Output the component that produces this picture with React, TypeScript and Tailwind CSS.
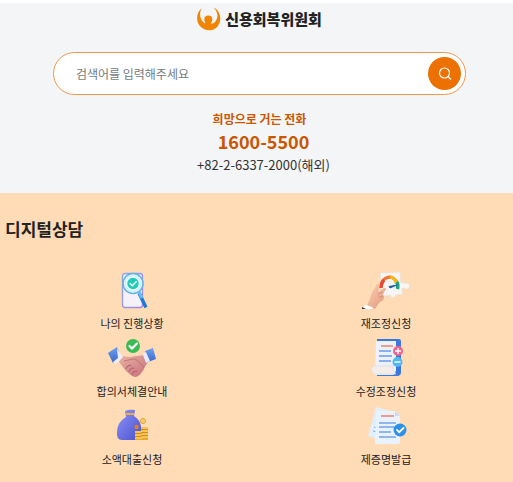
import type { ReactNode } from "react";

function Logo() {
  return (
    <svg viewBox="0 0 24 24" className="size-6" aria-hidden="true">
      <path d="M4.800 1.200C-.6 5-1.300 13.500 2.500 18.500C7 24.500 16 25 20.500 19.500C25.500 13.500 23.500 3.500 16.500.5C21 4.500 21.500 10.500 18.500 14.200C17.500 15.500 16 16.500 14 17C12.500 17.500 10 17.500 8.500 16.700C3.500 14.500 1.300 7 4.800 1.200Z" fill="#f18400" />
      <circle cx="11.300" cy="12.600" r="4" fill="#f18400" />
      <path d="M9 15h4.600l1.600 3H7z" fill="#f18400" />
    </svg>
  );
}

function ProgressIcon() {
  return (
    <svg viewBox="0 0 48 40" className="h-10 w-12" aria-hidden="true">
      <defs>
        <linearGradient id="phone" x1="0" y1="0" x2="1" y2="1">
          <stop offset="0" stopColor="#8fa6ef" />
          <stop offset="1" stopColor="#a487e0" />
        </linearGradient>
      </defs>
      <rect x="14.500" y="2.500" width="20" height="34" rx="2.500" fill="#f4f1fa" stroke="url(#phone)" strokeWidth="1.300" />
      <path d="M31 22l7 14.500" stroke="#2378d2" strokeWidth="3.500" />
      <path d="M31 21l3 6" stroke="#64bdf4" strokeWidth="3" />
      <circle cx="25" cy="12.500" r="10" fill="#effaff" stroke="#5fb2e6" strokeWidth="1.500" />
      <circle cx="25" cy="12.500" r="8" fill="none" stroke="#d4eefc" strokeWidth="1.500" />
      <circle cx="25" cy="12.500" r="5.700" fill="#1dcdb9" />
      <path d="M22.100 12.500l2.200 2.200 3.900-4" fill="none" stroke="#fff" strokeWidth="1.500" strokeLinecap="round" />
    </svg>
  );
}

function PuzzleIcon() {
  return (
    <svg viewBox="0 0 48 40" className="h-10 w-12" aria-hidden="true">
      <defs>
        <linearGradient id="skin" x1="0" y1="0" x2="1" y2="1">
          <stop offset="0" stopColor="#ffd2b3" />
          <stop offset="1" stopColor="#dc9680" />
        </linearGradient>
      </defs>
      <path d="M18 2l20-1 1 11c2-1 3-.5 4 .5 3-1.500 5 .5 4.500 3-.4 3-3 3.500-5 1.500l-2.500.5.500 6-7 .5c1 3-5 4-5 .5l-9 .500z" fill="#f8f5f5" stroke="#e8dbd4" strokeWidth=".6" />
      <path d="M19 17c-.5-12 13-15 16.500-4" fill="none" stroke="#f3772f" strokeWidth="3.200" />
      <path d="M19 17c0-4 1-6 3-8" fill="none" stroke="#e94837" strokeWidth="3.200" />
      <path d="M28 6c3 .5 5.500 3 6.500 6" fill="none" stroke="#f5b91c" strokeWidth="3.200" />
      <path d="M35 11c1 2 1 5 .5 7" fill="none" stroke="#18a47c" strokeWidth="3.500" />
      <path d="M27 15.500l8-1.500-7 3z" fill="#263c8c" stroke="#2463bb" strokeWidth="1" />
      <path d="M4 36c3-5 4-8 5-12 1-4 3-5 5-9 1-3 4-3 3.500 0L16 21c2 0 4-3 6-4 3 0 2 2 0 4l-1 3 1 2c0 3-2 4-4 5-2 2-3 4-5 7z" fill="url(#skin)" />
      <path d="M16 23l4-2M17 26l4-1" stroke="#ca8571" strokeWidth=".8" />
      <path d="M3 34c3 0 6 1 9 4H0z" fill="#fff" />
      <path d="M0 36l4 2H0z" fill="#333b56" />
    </svg>
  );
}

function HandshakeIcon() {
  return (
    <svg viewBox="0 0 48 40" className="h-10 w-12" aria-hidden="true">
      <defs>
        <linearGradient id="hands" x1="0" y1="0" x2="1" y2="1">
          <stop offset="0" stopColor="#eab4a3" />
          <stop offset="1" stopColor="#c66d7b" />
        </linearGradient>
        <linearGradient id="sleeve" x1="0" y1="0" x2="0" y2="1">
          <stop offset="0" stopColor="#6ca2ee" />
          <stop offset="1" stopColor="#3c68cc" />
        </linearGradient>
      </defs>
      <path d="M13 17l9 1 6-1 9-1 3 7c-2 3-3 4-4 7-3 5-6 8-9 8-4-1-6-4-9-6l-7-9z" fill="url(#hands)" />
      <path d="M16 22c5-1 8-2 11-2 4 2 7 6 9 9" fill="none" stroke="#b76775" strokeWidth=".8" />
      <path d="M18 30c0-2 4-5 5-3M21 33c0-3 4-5 5-3M24 36c0-3 4-5 5-3" fill="none" stroke="#b66674" strokeWidth="1.200" />
      <path d="M0 14l9-6 4 10-8 6z" fill="url(#sleeve)" />
      <path d="M9 10l6 8-7 7-3-2 5-4z" fill="#eef1fd" />
      <path d="M37 12l8-3 3 11-8 3z" fill="url(#sleeve)" />
      <path d="M35 16l3-3 4 9-4 2z" fill="#e8e9fd" />
      <circle cx="25" cy="7" r="7" fill="#3cba54" />
      <path d="M21.500 7l2.500 2.500 5-5" fill="none" stroke="#fff" strokeWidth="2.200" strokeLinecap="round" />
    </svg>
  );
}

function AdjustIcon() {
  return (
    <svg viewBox="0 0 48 40" className="h-10 w-12" aria-hidden="true">
      <path d="M15 0h22q2 0 2 2v31q0 4-4 4H15z" fill="#3b77dc" />
      <path d="M14 2h20v28c0 3-1 5-3 6H13z" fill="#edf1fb" />
      <path d="M11 27h20c-1 3 0 6 3 8H13c-4 0-4-6-2-8z" fill="#f5eee8" stroke="#d9dce7" strokeWidth=".7" />
      <path d="M19 7h12" stroke="#ed826f" strokeWidth="1.500" />
      <path d="M17 12h12M17 17h13M17 22h12" stroke="#6a9ceb" strokeWidth="1.500" />
      <circle cx="36" cy="12" r="5" fill="#ef658e" />
      <path d="M33 12h6M36 9v6" stroke="#fff" strokeWidth="1.400" />
      <circle cx="35.500" cy="23" r="5" fill="#52b8ef" />
      <path d="M32.500 23h6" stroke="#fff" strokeWidth="1.400" />
    </svg>
  );
}

function LoanIcon() {
  return (
    <svg viewBox="0 0 48 40" className="h-10 w-12" aria-hidden="true">
      <defs>
        <linearGradient id="bag" x1="0" y1="0" x2="1" y2="1">
          <stop offset="0" stopColor="#8e92fb" />
          <stop offset="1" stopColor="#4a53c9" />
        </linearGradient>
      </defs>
      <path d="M17 4q4-2 10-1l-1 6c7 4 8 12 7 18 0 4-3 6-6 6H14c-4 0-5-3-5-7 0-8 3-12 9-16z" fill="url(#bag)" />
      <path d="M18 7h8" stroke="#edae3c" strokeWidth="2" />
      <path d="M27 24h7v9h-7zM33 20h7v13h-7z" fill="#e8a62d" />
      <path d="M27 25h7M27 28h7M27 31h7M33 21h7M33 24h7M33 27h7M33 30h7" stroke="#ffe27c" strokeWidth="1" />
      <path d="M27 26.500h7M27 29.500h7M33 22.500h7M33 25.500h7M33 28.500h7" stroke="#bd771e" strokeWidth=".6" />
      <circle cx="35" cy="14" r="2.500" fill="#f9d06a" stroke="#dfa23b" strokeWidth="1" />
      <circle cx="28.500" cy="20" r="2.200" fill="#e17f22" />
    </svg>
  );
}

function CertificateIcon() {
  return (
    <svg viewBox="0 0 48 40" className="h-10 w-12" aria-hidden="true">
      <path d="M14 0l15 4-10 29-13-4z" fill="#e1effc" />
      <path d="M12 20l10 3M11 24l8 2" stroke="#76aaed" strokeWidth="1" />
      <path d="M14 4h19l5 5v26q0 2-2 2H15q-2 0-2-2z" fill="#e8f3ff" />
      <path d="M33 4v5h5z" fill="#c5def9" />
      <path d="M19 9h13" stroke="#ee8276" strokeWidth="1.600" />
      <path d="M17 16h17M17 20h17M17 25h12M17 30h17" stroke="#75a3eb" strokeWidth="1.500" />
      <circle cx="38" cy="23" r="6.500" fill="#2d91e8" />
      <path d="M35 23l2.200 2.200 4.300-4.200" fill="none" stroke="#fff" strokeWidth="1.800" strokeLinecap="round" />
    </svg>
  );
}

const services: { label: string; icon: ReactNode }[] = [
  { label: "나의 진행상황", icon: <ProgressIcon /> },
  { label: "재조정신청", icon: <PuzzleIcon /> },
  { label: "합의서체결안내", icon: <HandshakeIcon /> },
  { label: "수정조정신청", icon: <AdjustIcon /> },
  { label: "소액대출신청", icon: <LoanIcon /> },
  { label: "제증명발급", icon: <CertificateIcon /> },
];

export default function App() {
  return (
    <div className="bg-white pt-[3px] font-['Noto_Sans_CJK_KR',sans-serif] text-[#222]">
      <header className="flex flex-col items-center bg-[#f3f5f7] pt-1 pb-4 pl-[6px]">
        <h1 className="flex h-6 items-center gap-1 text-[15px] leading-6 font-black">
          <Logo />
          신용회복위원회
        </h1>
        <form
          role="search"
          onSubmit={(event) => event.preventDefault()}
          className="mt-[21px] flex h-[43px] w-[81.5%] items-center rounded-full border border-[#f0974a] bg-white pr-1 pl-[22px]"
        >
          <input
            type="search"
            aria-label="검색어"
            placeholder="검색어를 입력해주세요"
            className="min-w-0 flex-1 bg-transparent text-[12px] leading-5 outline-none placeholder:text-[#747b7d]"
          />
          <button type="submit" aria-label="검색" className="flex size-[33px] shrink-0 items-center justify-center rounded-full bg-[#ed7100] text-white">
            <svg viewBox="0 0 16 16" className="size-4" fill="none" stroke="currentColor" strokeWidth="1.200" aria-hidden="true">
              <circle cx="7.500" cy="7" r="5" />
              <path d="M11 10.500l3 3" />
            </svg>
          </button>
        </form>
        <div className="mt-[14px] flex flex-col items-center pl-2">
          <p className="pr-2 text-[12px] leading-5 font-bold text-[#cb5500]">희망으로 거는 전화</p>
          <a href="tel:1600-5500" className="text-[18px] leading-6 font-bold text-[#cb5500]">1600-5500</a>
          <a href="tel:+82-2-6337-2000" className="text-[13px] leading-6 text-[#333]">+82-2-6337-2000(해외)</a>
        </div>
      </header>
      <main className="bg-[#ffdbb6] pt-6 pb-3 pl-[5px]">
        <h2 className="text-[17px] leading-6 font-bold">디지털상담</h2>
        <ul className="mt-[30px] grid grid-cols-2">
          {services.map(({ label, icon }) => (
            <li key={label} className="flex h-[68px] justify-center">
              <a href="#" className="flex flex-col items-center gap-1 text-[11px] leading-4">
                {icon}
                {label}
              </a>
            </li>
          ))}
        </ul>
      </main>
    </div>
  );
}
